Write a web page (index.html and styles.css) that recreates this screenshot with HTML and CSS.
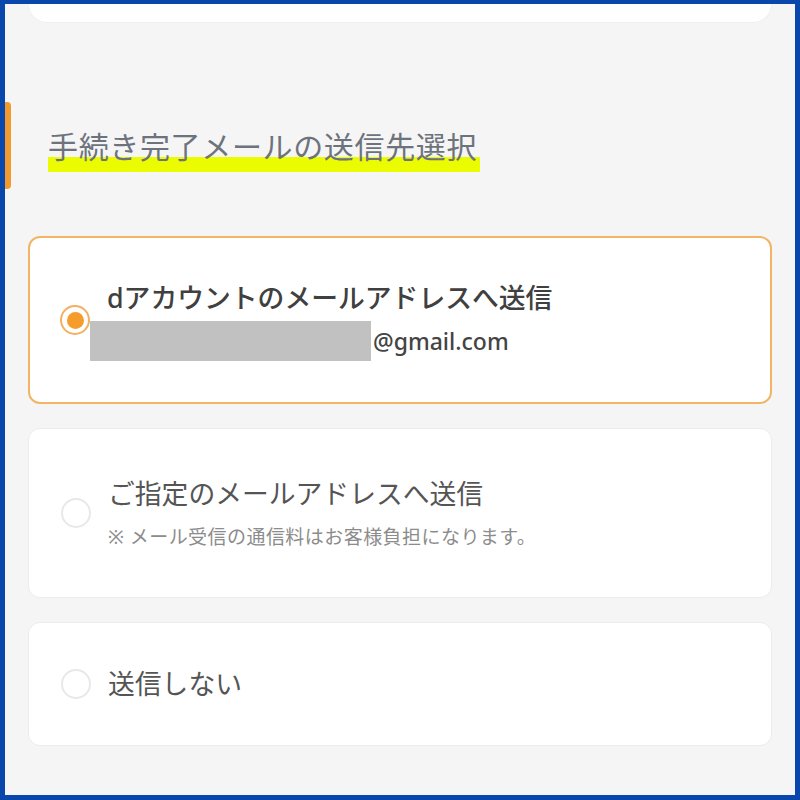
FILE: index.html
```html
<!DOCTYPE html>
<html lang="ja">
<head>
<meta charset="utf-8">
<link rel="stylesheet" href="styles.css">
</head>
<body>
<div class="frame">
  <div class="top-card"></div>
  <div class="section-head">
    <div class="marker"></div>
    <h2 class="heading"><span class="hl">手続き完了メールの送信先選択</span></h2>
  </div>
  <div class="options">
    <div class="card selected">
      <div class="radio on"><div class="dot"></div></div>
      <div class="body">
        <div class="title strong">dアカウントのメールアドレスへ送信</div>
        <div class="email"><span class="redact"></span>@gmail.com</div>
      </div>
    </div>
    <div class="card two">
      <div class="radio"></div>
      <div class="body">
        <div class="title">ご指定のメールアドレスへ送信</div>
        <div class="note">※ メール受信の通信料はお客様負担になります。</div>
      </div>
    </div>
    <div class="card three">
      <div class="radio"></div>
      <div class="body">
        <div class="title">送信しない</div>
      </div>
    </div>
  </div>
</div>
</body>
</html>
```

FILE: styles.css
```css
html, body {
  margin: 0;
  padding: 0;
}
body {
  font-family: "Noto Sans", "Noto Sans CJK JP", sans-serif;
}
.frame {
  width: 800px;
  height: 800px;
  box-sizing: border-box;
  border-style: solid;
  border-color: #0a47ad;
  border-width: 4px 5px 5px 5px;
  background: #f5f5f5;
  overflow: hidden;
}
.top-card {
  height: 18px;
  margin: 0 23px;
  background: #fff;
  border: 1px solid #efefef;
  border-top: none;
  border-radius: 0 0 32px 32px;
}
.section-head {
  display: flex;
  align-items: center;
  margin-top: 79px;
  height: 87px;
}
.marker {
  width: 6px;
  height: 87px;
  background: #f39a2e;
  border-radius: 0 4px 4px 0;
}
.heading {
  margin: 6px 0 0 37px;
  font-family: "Noto Sans CJK JP", sans-serif;
  font-weight: 400;
  font-size: 30px;
  letter-spacing: 0.65px;
  color: #6d737c;
  line-height: 1;
}
.hl {
  display: inline-block;
  line-height: 38px;
  padding-bottom: 8px;
  padding-right: 3px;
  background: linear-gradient(to bottom, transparent 31px, #ecfc00 31px, #ecfc00 46px, transparent 46px);
}
.options {
  display: flex;
  flex-direction: column;
  gap: 24px;
  margin: 47px 23px 0;
}
.card {
  display: flex;
  align-items: center;
  background: #fff;
  border: 1px solid #ececec;
  border-radius: 12px;
  box-sizing: border-box;
  padding-left: 32px;
}
.card.selected {
  height: 168px;
  border: 2px solid #f2b565;
  padding-left: 30px;
}
.card.two {
  height: 170px;
}
.card.three {
  height: 124px;
}
.radio {
  width: 30px;
  height: 30px;
  box-sizing: border-box;
  border: 2px solid #e8e8e8;
  border-radius: 50%;
  flex: none;
  display: flex;
  align-items: center;
  justify-content: center;
}
.radio.on {
  border-color: #f2b060;
}
.dot {
  width: 17px;
  height: 17px;
  border-radius: 50%;
  background: #f59c2c;
}
.body {
  margin-left: 17px;
  display: flex;
  flex-direction: column;
}
.title {
  font-size: 26.8px;
  line-height: 38px;
  color: #555;
}
.title.strong {
  font-weight: 500;
  color: #404040;
}
.email {
  font-size: 23px;
  line-height: 40px;
  font-weight: 500;
  color: #444;
  display: flex;
  align-items: center;
  margin-top: 4px;
}
.redact {
  display: inline-block;
  width: 281px;
  height: 40px;
  margin-left: -17px;
  margin-right: 2px;
  background: #c1c1c1;
}
.note {
  font-size: 19px;
  letter-spacing: 0.45px;
  line-height: 28px;
  color: #8c8c8c;
  margin-top: 10px;
}
```
